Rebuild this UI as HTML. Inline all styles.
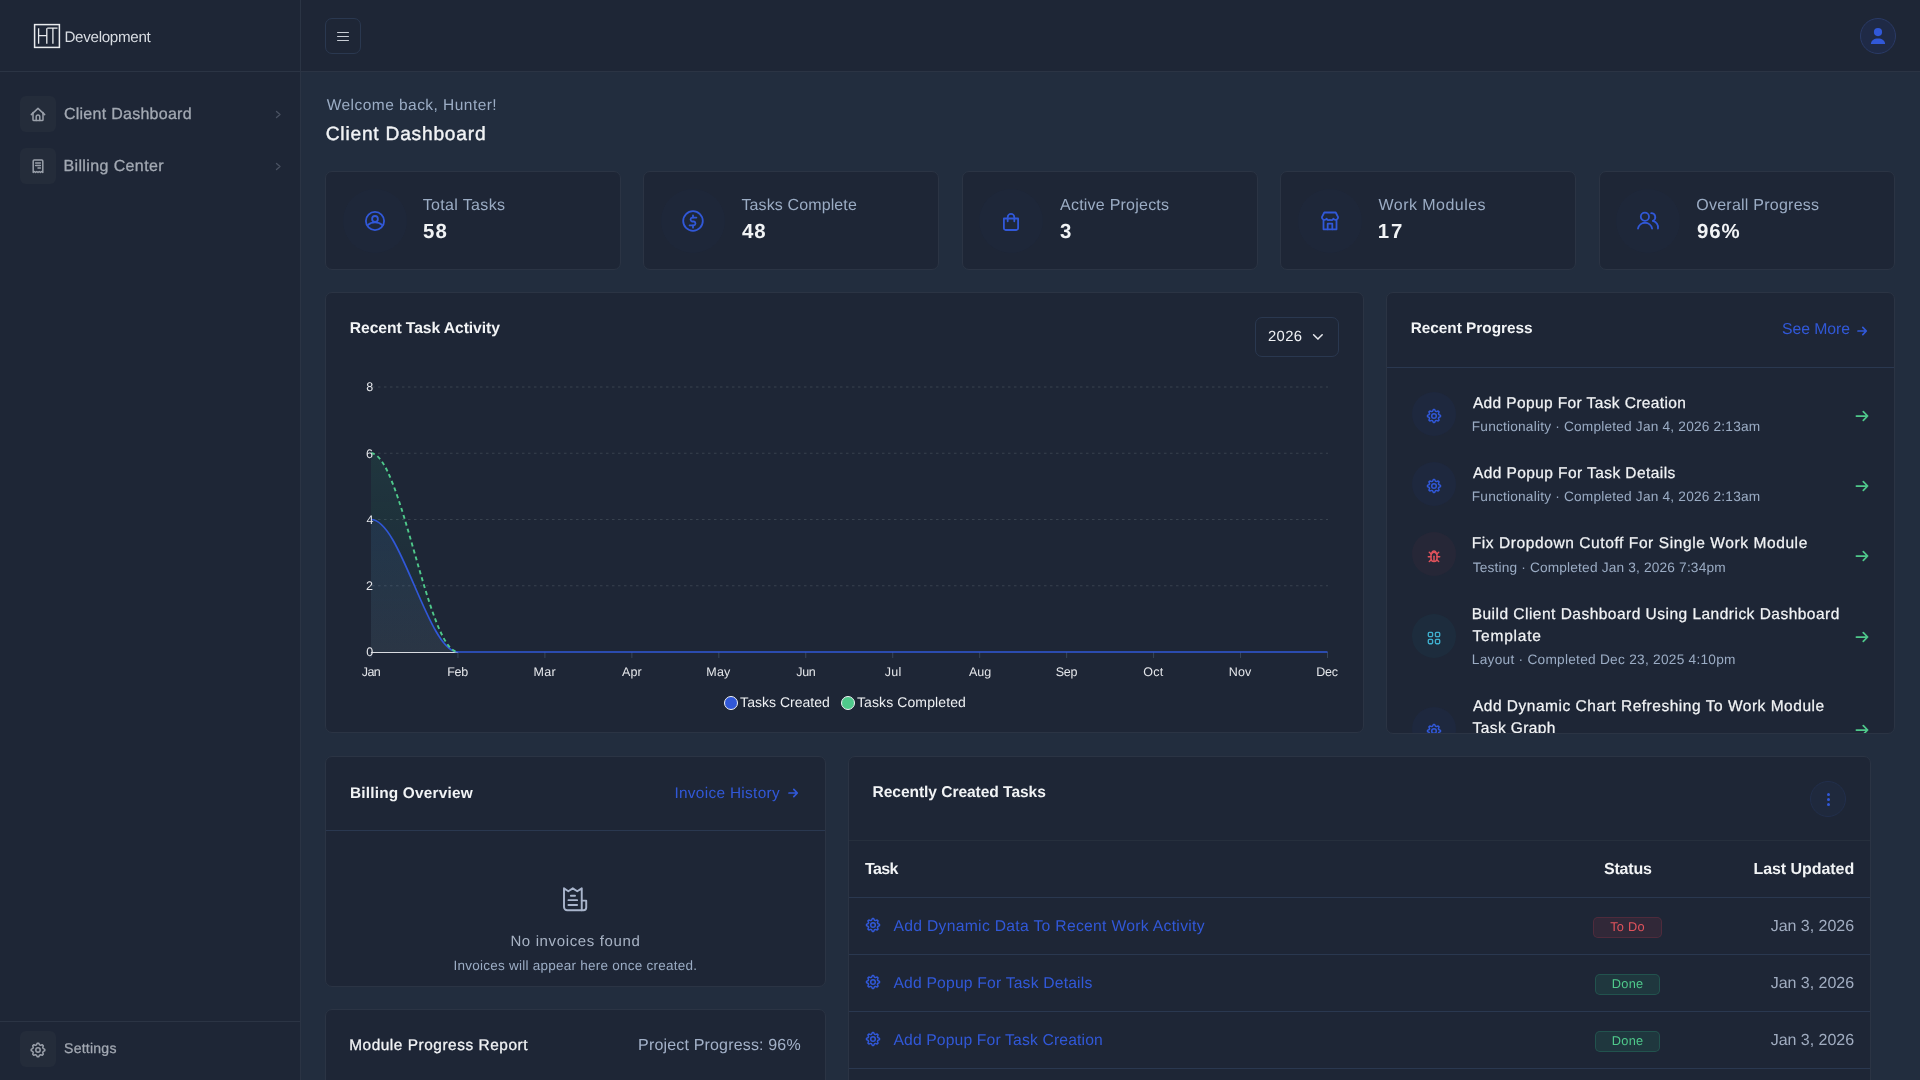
<!DOCTYPE html>
<html lang="en"><head><meta charset="utf-8"><title>Client Dashboard</title>
<style>
html,body{margin:0;padding:0}
body{width:1920px;height:1080px;overflow:hidden;position:relative;background:#222d3e;font-family:"Liberation Sans",sans-serif}
#root{position:absolute;left:0;top:0;width:1920px;height:1080px;overflow:hidden;will-change:transform;text-rendering:geometricPrecision}
.a{position:absolute}
.t{position:absolute;line-height:1;white-space:nowrap}
.card{background:#1e2636;border:1px solid #2b3444;border-radius:7px;box-sizing:border-box}
</style></head><body><div id="root">
<div class="a" style="left:0px;top:0px;width:300px;height:1080px;background:#1e2636;border-right:1px solid #2b3444"></div>
<div class="a" style="left:0px;top:71px;width:300px;height:1px;background:#2b3444"></div>
<svg class="a" style="left:33px;top:23px;" width="28" height="26" viewBox="0 0 28 26" fill="none"><rect x="1.6" y="1.6" width="24.8" height="22.8" stroke="#e9ebee" stroke-width="1.5"/><path d="M5.6 5.2v15.6M13.8 5.2v15.6M5.6 12.6h8.2M14.3 5.2h10.2M19.9 5.2v15.6" stroke="#e9ebee" stroke-width="1.3"/></svg>
<div class="t" style="left:64.48px;top:30px;font-size:15.2px;letter-spacing:-0.321px;color:#d8dce2;font-weight:400;">Development</div>
<div class="a" style="left:20px;top:96px;width:36px;height:36px;background:#242c3a;border-radius:6px"></div>
<svg class="a" style="left:26.00px;top:102.00px" width="24.00" height="24.00" viewBox="0 0 24 24" fill="none" stroke="#9aa0aa" stroke-width="1.5" stroke-linecap="round" stroke-linejoin="round"><path d="M5.3 12.6 12 6.4l6.7 6.2"/><path d="M7 10.6v7.1a.9.9 0 0 0 .9.9h8.2a.9.9 0 0 0 .9-.9v-7.1"/><path d="M10.2 18.5v-3.6a1.8 1.8 0 0 1 3.6 0v3.6"/></svg>
<div class="t" style="left:63.90px;top:107px;font-size:16px;letter-spacing:0.271px;color:#a3a9b3;font-weight:400;-webkit-text-stroke:0.3px #a3a9b3">Client Dashboard</div>
<svg class="a" style="left:274px;top:110px;" width="8" height="9" viewBox="0 0 8 9" fill="none"><path d="M2.5 1.5 6 4.5 2.5 7.5" stroke="#4a5262" stroke-width="1.3" stroke-linecap="round" stroke-linejoin="round"/></svg>
<div class="a" style="left:20px;top:148px;width:36px;height:36px;background:#242c3a;border-radius:6px"></div>
<svg class="a" style="left:26.00px;top:154.00px" width="24.00" height="24.00" viewBox="0 0 24 24" fill="none" stroke="#9aa0aa" stroke-width="1.5" stroke-linecap="round" stroke-linejoin="round"><path d="M7.2 18.4V6.9a1 1 0 0 1 1-1h7.6a1 1 0 0 1 1 1v11.5l-1.2-.9-1.2.9-1.2-.9-1.2.9-1.2-.9-1.2.9-1.2-.9z"/><path d="M9.6 9.1h4.8M9.6 11.4h4.8M12 13.9h2.4"/></svg>
<div class="t" style="left:63.42px;top:159px;font-size:16px;letter-spacing:0.386px;color:#a3a9b3;font-weight:400;-webkit-text-stroke:0.3px #a3a9b3">Billing Center</div>
<svg class="a" style="left:274px;top:162px;" width="8" height="9" viewBox="0 0 8 9" fill="none"><path d="M2.5 1.5 6 4.5 2.5 7.5" stroke="#4a5262" stroke-width="1.3" stroke-linecap="round" stroke-linejoin="round"/></svg>
<div class="a" style="left:0px;top:1021px;width:300px;height:1px;background:#2b3444"></div>
<div class="a" style="left:20px;top:1031px;width:36px;height:36px;background:#242c3a;border-radius:6px"></div>
<svg class="a" style="left:26.00px;top:1037.60px" width="24.00" height="24.00" viewBox="0 0 24 24" fill="none" stroke="#9aa0aa" stroke-width="1.5" stroke-linecap="round" stroke-linejoin="round"><path d="M11.33 5.23 L12.67 5.23 L13.57 6.83 L14.55 7.24 L16.31 6.74 L17.26 7.69 L16.76 9.45 L17.17 10.43 L18.77 11.33 L18.77 12.67 L17.17 13.57 L16.76 14.55 L17.26 16.31 L16.31 17.26 L14.55 16.76 L13.57 17.17 L12.67 18.77 L11.33 18.77 L10.43 17.17 L9.45 16.76 L7.69 17.26 L6.74 16.31 L7.24 14.55 L6.83 13.57 L5.23 12.67 L5.23 11.33 L6.83 10.43 L7.24 9.45 L6.74 7.69 L7.69 6.74 L9.45 7.24 L10.43 6.83Z"/><circle cx="12" cy="12" r="2.2"/></svg>
<div class="t" style="left:64.07px;top:1041px;font-size:14.1px;letter-spacing:0.208px;color:#a3a9b3;font-weight:400;-webkit-text-stroke:0.25px #a3a9b3">Settings</div>
<div class="a" style="left:301px;top:0px;width:1619px;height:71px;background:#1e2636"></div>
<div class="a" style="left:301px;top:71px;width:1619px;height:1px;background:#2b3444"></div>
<div class="a" style="left:325px;top:18px;width:36px;height:36px;border:1px solid #2a3850;border-radius:7px;box-sizing:border-box"></div>
<div class="a" style="left:337px;top:31.85px;width:12px;height:1.3px;background:#c9ced6;border-radius:1px"></div>
<div class="a" style="left:337px;top:35.85px;width:12px;height:1.3px;background:#c9ced6;border-radius:1px"></div>
<div class="a" style="left:337px;top:39.85px;width:12px;height:1.3px;background:#c9ced6;border-radius:1px"></div>
<div class="a" style="left:1860px;top:18px;width:36px;height:36px;background:#1f2a46;border:1px solid #2a3a66;border-radius:50%;box-sizing:border-box"></div>
<svg class="a" style="left:1868px;top:26px;" width="20" height="20" viewBox="0 0 20 20" fill="none"><circle cx="10" cy="6.1" r="4.1" fill="#3158d8"/><path d="M2.9 18c0-3.6 3.2-5.6 7.1-5.6s7.1 2 7.1 5.6z" fill="#3158d8"/></svg>
<div class="t" style="left:326.70px;top:98px;font-size:15.5px;letter-spacing:0.459px;color:#9bacc4;font-weight:400;">Welcome back, Hunter!</div>
<div class="t" style="left:325.74px;top:125px;font-size:19.2px;letter-spacing:0.773px;color:#f1f3f5;font-weight:400;-webkit-text-stroke:0.4px #f1f3f5">Client Dashboard</div>
<div class="a card" style="left:325px;top:171px;width:296px;height:99px"></div>
<div class="a" style="left:342.6px;top:188.5px;width:64px;height:64px;border-radius:50%;background:rgba(47,85,212,0.022)"></div>
<svg class="a" style="left:362.60px;top:208.80px" width="24.00" height="24.00" viewBox="0 0 24 24" fill="none" stroke="#3158d8" stroke-width="1.8" stroke-linecap="round" stroke-linejoin="round"><circle cx="12" cy="12" r="9.1"/><circle cx="12" cy="9.9" r="2.9"/><path d="M5.1 15.9C6.6 14.3 9.1 13.3 12 13.3s5.4 1 6.9 2.6"/></svg>
<div class="t" style="left:422.68px;top:198px;font-size:16px;letter-spacing:0.350px;color:#9bacc4;font-weight:400;">Total Tasks</div>
<div class="t" style="left:422.89px;top:222px;font-size:20.4px;letter-spacing:1.278px;color:#f1f3f5;font-weight:700;">58</div>
<div class="a card" style="left:643px;top:171px;width:296px;height:99px"></div>
<div class="a" style="left:661.0px;top:188.5px;width:64px;height:64px;border-radius:50%;background:rgba(47,85,212,0.022)"></div>
<svg class="a" style="left:681.00px;top:208.80px" width="24.00" height="24.00" viewBox="0 0 24 24" fill="none" stroke="#3158d8" stroke-width="1.8" stroke-linecap="round" stroke-linejoin="round"><circle cx="12" cy="12" r="9.8"/><path d="M15.4 8.6h-4.3a2 2 0 0 0 0 3.9h1.8a2 2 0 0 1 0 3.9H8.6"/><path d="M12 6.3v2.3M12 16.4v2.3"/></svg>
<div class="t" style="left:741.38px;top:198px;font-size:16px;letter-spacing:0.125px;color:#9bacc4;font-weight:400;">Tasks Complete</div>
<div class="t" style="left:741.89px;top:222px;font-size:20.4px;letter-spacing:1.072px;color:#f1f3f5;font-weight:700;">48</div>
<div class="a card" style="left:962px;top:171px;width:296px;height:99px"></div>
<div class="a" style="left:979.2px;top:188.5px;width:64px;height:64px;border-radius:50%;background:rgba(47,85,212,0.022)"></div>
<svg class="a" style="left:999.20px;top:208.80px" width="24.00" height="24.00" viewBox="0 0 24 24" fill="none" stroke="#3158d8" stroke-width="1.8" stroke-linecap="round" stroke-linejoin="round"><path d="M4.9 9.5h14.2v9.7a1.8 1.8 0 0 1-1.8 1.8H6.7a1.8 1.8 0 0 1-1.8-1.8z"/><path d="M8.7 12.3V8.2a3.3 3.3 0 0 1 6.6 0v4.1"/></svg>
<div class="t" style="left:1060.00px;top:198px;font-size:16px;letter-spacing:0.230px;color:#9bacc4;font-weight:400;">Active Projects</div>
<div class="t" style="left:1060.09px;top:222px;font-size:20.4px;letter-spacing:0.300px;color:#f1f3f5;font-weight:700;">3</div>
<div class="a card" style="left:1280px;top:171px;width:296px;height:99px"></div>
<div class="a" style="left:1297.9px;top:188.5px;width:64px;height:64px;border-radius:50%;background:rgba(47,85,212,0.022)"></div>
<svg class="a" style="left:1317.90px;top:208.80px" width="24.00" height="24.00" viewBox="0 0 24 24" fill="none" stroke="#3158d8" stroke-width="1.8" stroke-linecap="round" stroke-linejoin="round"><path d="M6.3 3.5h11.4l2.4 4.7a2.6 2.6 0 0 1-4.7 1.6 2.6 2.6 0 0 1-3.4 1 2.6 2.6 0 0 1-3.4-1A2.6 2.6 0 0 1 3.9 8.2z"/><path d="M5.5 10.9v9.4h13v-9.4"/><path d="M9.7 20.3v-5.6h4.6v5.6"/></svg>
<div class="t" style="left:1378.50px;top:198px;font-size:16px;letter-spacing:0.460px;color:#9bacc4;font-weight:400;">Work Modules</div>
<div class="t" style="left:1377.78px;top:222px;font-size:20.4px;letter-spacing:1.896px;color:#f1f3f5;font-weight:700;">17</div>
<div class="a card" style="left:1599px;top:171px;width:296px;height:99px"></div>
<div class="a" style="left:1616.0px;top:188.5px;width:64px;height:64px;border-radius:50%;background:rgba(47,85,212,0.022)"></div>
<svg class="a" style="left:1636.00px;top:208.80px" width="24.00" height="24.00" viewBox="0 0 24 24" fill="none" stroke="#3158d8" stroke-width="1.8" stroke-linecap="round" stroke-linejoin="round"><circle cx="8.9" cy="7.8" r="4.1"/><path d="M2 19.5A7.2 7.2 0 0 1 16.1 19.5"/><path d="M15.2 4.2A4 4 0 0 1 17 11.8"/><path d="M17 11.9A7.4 7.4 0 0 1 22 19.5"/></svg>
<div class="t" style="left:1696.28px;top:198px;font-size:16px;letter-spacing:0.244px;color:#9bacc4;font-weight:400;">Overall Progress</div>
<div class="t" style="left:1696.89px;top:222px;font-size:20.4px;letter-spacing:0.911px;color:#f1f3f5;font-weight:700;">96%</div>
<div class="a card" style="left:325px;top:292px;width:1039px;height:441px"></div>
<div class="t" style="left:349.78px;top:321px;font-size:15.7px;letter-spacing:-0.084px;color:#f1f3f5;font-weight:700;">Recent Task Activity</div>
<div class="a" style="left:1255px;top:317px;width:84px;height:40px;border:1px solid #2a3850;border-radius:7px;box-sizing:border-box"></div>
<div class="t" style="left:1268.06px;top:330px;font-size:14.8px;letter-spacing:0.334px;color:#eef0f3;font-weight:400;">2026</div>
<svg class="a" style="left:1311px;top:331px;" width="14" height="10" viewBox="0 0 14 10" fill="none"><path d="M2.6 3.7 6.9 8.1 11.2 3.7" stroke="#e6e8ec" stroke-width="1.5" stroke-linecap="round" stroke-linejoin="round"/></svg>
<svg class="a" style="left:0;top:0" width="1920" height="1080" viewBox="0 0 1920 1080"><line x1="372" y1="387" x2="1328" y2="387" stroke="#38424f" stroke-width="1" stroke-dasharray="2.5 3.5"/><line x1="372" y1="453.25" x2="1328" y2="453.25" stroke="#38424f" stroke-width="1" stroke-dasharray="2.5 3.5"/><line x1="372" y1="519.5" x2="1328" y2="519.5" stroke="#38424f" stroke-width="1" stroke-dasharray="2.5 3.5"/><line x1="372" y1="585.75" x2="1328" y2="585.75" stroke="#38424f" stroke-width="1" stroke-dasharray="2.5 3.5"/><defs><linearGradient id="gg" x1="0" y1="0" x2="0" y2="1"><stop offset="0" stop-color="#2eca8b" stop-opacity="0.10"/><stop offset="1" stop-color="#2eca8b" stop-opacity="0.02"/></linearGradient><linearGradient id="gb" x1="0" y1="0" x2="0" y2="1"><stop offset="0" stop-color="#3a5fd0" stop-opacity="0.10"/><stop offset="1" stop-color="#8a96aa" stop-opacity="0.12"/></linearGradient></defs><path d="M371.0 453.25 C401.0 453.25 427.95454545454544 652 457.95454545454544 652 L371.0 652Z" fill="url(#gg)"/><path d="M371.0 519.5 C401.0 519.5 427.95454545454544 652 457.95454545454544 652 L371.0 652Z" fill="url(#gb)"/><line x1="371.00" y1="652" x2="371.00" y2="658" stroke="#38465a" stroke-width="1"/><line x1="457.95" y1="652" x2="457.95" y2="658" stroke="#38465a" stroke-width="1"/><line x1="544.91" y1="652" x2="544.91" y2="658" stroke="#38465a" stroke-width="1"/><line x1="631.86" y1="652" x2="631.86" y2="658" stroke="#38465a" stroke-width="1"/><line x1="718.82" y1="652" x2="718.82" y2="658" stroke="#38465a" stroke-width="1"/><line x1="805.77" y1="652" x2="805.77" y2="658" stroke="#38465a" stroke-width="1"/><line x1="892.73" y1="652" x2="892.73" y2="658" stroke="#38465a" stroke-width="1"/><line x1="979.68" y1="652" x2="979.68" y2="658" stroke="#38465a" stroke-width="1"/><line x1="1066.64" y1="652" x2="1066.64" y2="658" stroke="#38465a" stroke-width="1"/><line x1="1153.59" y1="652" x2="1153.59" y2="658" stroke="#38465a" stroke-width="1"/><line x1="1240.55" y1="652" x2="1240.55" y2="658" stroke="#38465a" stroke-width="1"/><line x1="1327.50" y1="652" x2="1327.50" y2="658" stroke="#38465a" stroke-width="1"/><line x1="371.0" y1="652.5" x2="457.95454545454544" y2="652.5" stroke="#d9dce1" stroke-width="1.2"/><path d="M371.0 519.5 C401.0 519.5 427.95454545454544 652 457.95454545454544 652 L1327.5 652" stroke="#3158d8" stroke-width="1.7" fill="none"/><path d="M371.0 453.25 C401.0 453.25 427.95454545454544 652 457.95454545454544 652" stroke="#4fc98b" stroke-width="1.9" fill="none" stroke-dasharray="4 3.2"/></svg>
<div class="t" style="left:366.20px;top:381px;font-size:12.5px;letter-spacing:0.262px;color:#e4e6ea;font-weight:400;">8</div>
<div class="t" style="left:366.07px;top:448px;font-size:12.5px;letter-spacing:0.387px;color:#e4e6ea;font-weight:400;">6</div>
<div class="t" style="left:366.45px;top:514px;font-size:12.5px;letter-spacing:-0.175px;color:#e4e6ea;font-weight:400;">4</div>
<div class="t" style="left:366.07px;top:580px;font-size:12.5px;letter-spacing:0.450px;color:#e4e6ea;font-weight:400;">2</div>
<div class="t" style="left:366.26px;top:646px;font-size:12.5px;letter-spacing:0.137px;color:#e4e6ea;font-weight:400;">0</div>
<div class="t" style="left:361.81px;top:666px;font-size:12.5px;letter-spacing:-0.594px;color:#e4e6ea;font-weight:400;">Jan</div>
<div class="t" style="left:447.20px;top:666px;font-size:12.5px;letter-spacing:-0.250px;color:#e4e6ea;font-weight:400;">Feb</div>
<div class="t" style="left:533.41px;top:666px;font-size:12.5px;letter-spacing:0.312px;color:#e4e6ea;font-weight:400;">Mar</div>
<div class="t" style="left:622.11px;top:666px;font-size:12.5px;letter-spacing:0.094px;color:#e4e6ea;font-weight:400;">Apr</div>
<div class="t" style="left:706.32px;top:666px;font-size:12.5px;letter-spacing:0.188px;color:#e4e6ea;font-weight:400;">May</div>
<div class="t" style="left:796.34px;top:666px;font-size:12.5px;letter-spacing:-0.344px;color:#e4e6ea;font-weight:400;">Jun</div>
<div class="t" style="left:884.79px;top:666px;font-size:12.5px;letter-spacing:0.250px;color:#e4e6ea;font-weight:400;">Jul</div>
<div class="t" style="left:968.93px;top:666px;font-size:12.5px;letter-spacing:0.000px;color:#e4e6ea;font-weight:400;">Aug</div>
<div class="t" style="left:1055.82px;top:666px;font-size:12.5px;letter-spacing:-0.344px;color:#e4e6ea;font-weight:400;">Sep</div>
<div class="t" style="left:1143.28px;top:666px;font-size:12.5px;letter-spacing:0.312px;color:#e4e6ea;font-weight:400;">Oct</div>
<div class="t" style="left:1228.85px;top:666px;font-size:12.5px;letter-spacing:0.075px;color:#e4e6ea;font-weight:400;">Nov</div>
<div class="t" style="left:1316.25px;top:666px;font-size:12.5px;letter-spacing:-0.219px;color:#e4e6ea;font-weight:400;">Dec</div>
<div class="a" style="left:723.5px;top:695.5px;width:14px;height:14px;background:#3158d8;border:1.2px solid #f1f3f5;border-radius:50%;box-sizing:border-box"></div>
<div class="t" style="left:740.12px;top:695px;font-size:14px;letter-spacing:0.022px;color:#eef0f3;font-weight:400;">Tasks Created</div>
<div class="a" style="left:840.5px;top:695.5px;width:14px;height:14px;background:#4fc98b;border:1.2px solid #f1f3f5;border-radius:50%;box-sizing:border-box"></div>
<div class="t" style="left:856.92px;top:695px;font-size:14px;letter-spacing:0.110px;color:#eef0f3;font-weight:400;">Tasks Completed</div>
<div class="a card" style="left:1386px;top:292px;width:509px;height:442px"></div>
<div class="a" style="left:0;top:0;width:1920px;height:733px;overflow:hidden"><div class="t" style="left:1410.70px;top:321px;font-size:15.4px;letter-spacing:-0.030px;color:#f1f3f5;font-weight:700;">Recent Progress</div><div class="t" style="left:1781.99px;top:322px;font-size:15.8px;letter-spacing:-0.064px;color:#3158d8;font-weight:400;">See More</div><svg class="a" style="left:1850.00px;top:318.50px" width="24.00" height="24.00" viewBox="0 0 24 24" fill="none" stroke="#3158d8" stroke-width="1.7" stroke-linecap="round" stroke-linejoin="round"><path d="M8 12h8M12.8 8.4 16.3 12l-3.5 3.6"/></svg><div class="a" style="left:1387px;top:367px;width:507px;height:1px;background:#2a3850"></div><div class="a" style="left:1412px;top:391.90px;width:44px;height:44px;border-radius:50%;background:rgba(47,85,212,0.05)"></div><svg class="a" style="left:1422.00px;top:403.60px" width="24.00" height="24.00" viewBox="0 0 24 24" fill="none" stroke="#3158d8" stroke-width="1.5" stroke-linecap="round" stroke-linejoin="round"><path d="M11.36 5.53 L12.64 5.53 L13.45 7.22 L14.36 7.59 L16.12 6.98 L17.02 7.88 L16.41 9.64 L16.78 10.55 L18.47 11.36 L18.47 12.64 L16.78 13.45 L16.41 14.36 L17.02 16.12 L16.12 17.02 L14.36 16.41 L13.45 16.78 L12.64 18.47 L11.36 18.47 L10.55 16.78 L9.64 16.41 L7.88 17.02 L6.98 16.12 L7.59 14.36 L7.22 13.45 L5.53 12.64 L5.53 11.36 L7.22 10.55 L7.59 9.64 L6.98 7.88 L7.88 6.98 L9.64 7.59 L10.55 7.22Z"/><circle cx="12" cy="12" r="2.3"/></svg><div class="t" style="left:1472.90px;top:396px;font-size:15.5px;letter-spacing:0.384px;color:#f1f3f5;font-weight:400;-webkit-text-stroke:0.25px #f1f3f5">Add Popup For Task Creation</div><div class="t" style="left:1471.80px;top:420px;font-size:13.7px;letter-spacing:0.195px;color:#9bacc4;font-weight:400;">Functionality · Completed Jan 4, 2026 2:13am</div><svg class="a" style="left:1849.80px;top:403.50px" width="24.00" height="24.00" viewBox="0 0 24 24" fill="none" stroke="#4fc98b" stroke-width="1.75" stroke-linecap="round" stroke-linejoin="round"><path d="M6.4 12h11M13.3 7.7 17.6 12l-4.3 4.3"/></svg><div class="a" style="left:1412px;top:461.90px;width:44px;height:44px;border-radius:50%;background:rgba(47,85,212,0.05)"></div><svg class="a" style="left:1422.00px;top:473.60px" width="24.00" height="24.00" viewBox="0 0 24 24" fill="none" stroke="#3158d8" stroke-width="1.5" stroke-linecap="round" stroke-linejoin="round"><path d="M11.36 5.53 L12.64 5.53 L13.45 7.22 L14.36 7.59 L16.12 6.98 L17.02 7.88 L16.41 9.64 L16.78 10.55 L18.47 11.36 L18.47 12.64 L16.78 13.45 L16.41 14.36 L17.02 16.12 L16.12 17.02 L14.36 16.41 L13.45 16.78 L12.64 18.47 L11.36 18.47 L10.55 16.78 L9.64 16.41 L7.88 17.02 L6.98 16.12 L7.59 14.36 L7.22 13.45 L5.53 12.64 L5.53 11.36 L7.22 10.55 L7.59 9.64 L6.98 7.88 L7.88 6.98 L9.64 7.59 L10.55 7.22Z"/><circle cx="12" cy="12" r="2.3"/></svg><div class="t" style="left:1472.90px;top:466px;font-size:15.5px;letter-spacing:0.421px;color:#f1f3f5;font-weight:400;-webkit-text-stroke:0.25px #f1f3f5">Add Popup For Task Details</div><div class="t" style="left:1471.80px;top:490px;font-size:13.7px;letter-spacing:0.195px;color:#9bacc4;font-weight:400;">Functionality · Completed Jan 4, 2026 2:13am</div><svg class="a" style="left:1849.80px;top:473.50px" width="24.00" height="24.00" viewBox="0 0 24 24" fill="none" stroke="#4fc98b" stroke-width="1.75" stroke-linecap="round" stroke-linejoin="round"><path d="M6.4 12h11M13.3 7.7 17.6 12l-4.3 4.3"/></svg><div class="a" style="left:1412px;top:532.00px;width:44px;height:44px;border-radius:50%;background:rgba(228,63,82,0.045)"></div><svg class="a" style="left:1422.00px;top:543.70px" width="24.00" height="24.00" viewBox="0 0 24 24" fill="none" stroke="#e0535c" stroke-width="1.5" stroke-linecap="round" stroke-linejoin="round"><path d="M9 11.3a3 3 0 0 1 6 0v3.2a3 3 0 0 1-6 0z"/><path d="M10.2 8.9a1.8 1.8 0 0 1 3.6 0"/><path d="M12 12.2v4.2"/><path d="M9 12.8H6.3M15 12.8h2.7M9.4 10.2 7.3 8.3M14.6 10.2l2.1-1.9M9.3 15.7l-2 1.8M14.7 15.7l2 1.8"/></svg><div class="t" style="left:1471.66px;top:536px;font-size:15.5px;letter-spacing:0.593px;color:#f1f3f5;font-weight:400;-webkit-text-stroke:0.25px #f1f3f5">Fix Dropdown Cutoff For Single Work Module</div><div class="t" style="left:1472.63px;top:561px;font-size:13.7px;letter-spacing:0.175px;color:#9bacc4;font-weight:400;">Testing · Completed Jan 3, 2026 7:34pm</div><svg class="a" style="left:1849.80px;top:543.60px" width="24.00" height="24.00" viewBox="0 0 24 24" fill="none" stroke="#4fc98b" stroke-width="1.75" stroke-linecap="round" stroke-linejoin="round"><path d="M6.4 12h11M13.3 7.7 17.6 12l-4.3 4.3"/></svg><div class="a" style="left:1412px;top:613.80px;width:44px;height:44px;border-radius:50%;background:rgba(23,162,184,0.055)"></div><svg class="a" style="left:1422.00px;top:625.50px" width="24.00" height="24.00" viewBox="0 0 24 24" fill="none" stroke="#3fb0cf" stroke-width="1.35" stroke-linecap="round" stroke-linejoin="round"><rect x="6.3" y="6.3" width="4.3" height="4.3" rx="1.1"/><rect x="13.4" y="6.3" width="4.3" height="4.3" rx="1.1"/><rect x="6.3" y="13.4" width="4.3" height="4.3" rx="1.1"/><rect x="13.4" y="13.4" width="4.3" height="4.3" rx="1.1"/></svg><div class="t" style="left:1471.66px;top:607px;font-size:15.5px;letter-spacing:0.482px;color:#f1f3f5;font-weight:400;-webkit-text-stroke:0.25px #f1f3f5">Build Client Dashboard Using Landrick Dashboard</div><div class="t" style="left:1472.59px;top:629px;font-size:15.5px;letter-spacing:0.782px;color:#f1f3f5;font-weight:400;-webkit-text-stroke:0.25px #f1f3f5">Template</div><div class="t" style="left:1471.80px;top:653px;font-size:13.7px;letter-spacing:0.259px;color:#9bacc4;font-weight:400;">Layout · Completed Dec 23, 2025 4:10pm</div><svg class="a" style="left:1849.80px;top:625.40px" width="24.00" height="24.00" viewBox="0 0 24 24" fill="none" stroke="#4fc98b" stroke-width="1.75" stroke-linecap="round" stroke-linejoin="round"><path d="M6.4 12h11M13.3 7.7 17.6 12l-4.3 4.3"/></svg><div class="a" style="left:1412px;top:706.80px;width:44px;height:44px;border-radius:50%;background:rgba(47,85,212,0.05)"></div><svg class="a" style="left:1422.00px;top:718.50px" width="24.00" height="24.00" viewBox="0 0 24 24" fill="none" stroke="#3158d8" stroke-width="1.5" stroke-linecap="round" stroke-linejoin="round"><path d="M11.36 5.53 L12.64 5.53 L13.45 7.22 L14.36 7.59 L16.12 6.98 L17.02 7.88 L16.41 9.64 L16.78 10.55 L18.47 11.36 L18.47 12.64 L16.78 13.45 L16.41 14.36 L17.02 16.12 L16.12 17.02 L14.36 16.41 L13.45 16.78 L12.64 18.47 L11.36 18.47 L10.55 16.78 L9.64 16.41 L7.88 17.02 L6.98 16.12 L7.59 14.36 L7.22 13.45 L5.53 12.64 L5.53 11.36 L7.22 10.55 L7.59 9.64 L6.98 7.88 L7.88 6.98 L9.64 7.59 L10.55 7.22Z"/><circle cx="12" cy="12" r="2.3"/></svg><div class="t" style="left:1472.90px;top:699px;font-size:15.5px;letter-spacing:0.520px;color:#f1f3f5;font-weight:400;-webkit-text-stroke:0.25px #f1f3f5">Add Dynamic Chart Refreshing To Work Module</div><div class="t" style="left:1472.59px;top:721px;font-size:15.5px;letter-spacing:0.393px;color:#f1f3f5;font-weight:400;-webkit-text-stroke:0.25px #f1f3f5">Task Graph</div><div class="t" style="left:1471.80px;top:745px;font-size:13.7px;letter-spacing:0.195px;color:#9bacc4;font-weight:400;">Functionality · Completed Jan 2, 2026 1:05pm</div><svg class="a" style="left:1849.80px;top:718.40px" width="24.00" height="24.00" viewBox="0 0 24 24" fill="none" stroke="#4fc98b" stroke-width="1.75" stroke-linecap="round" stroke-linejoin="round"><path d="M6.4 12h11M13.3 7.7 17.6 12l-4.3 4.3"/></svg></div>
<div class="a card" style="left:325px;top:756px;width:501px;height:231px"></div>
<div class="t" style="left:349.90px;top:786px;font-size:15.4px;letter-spacing:0.206px;color:#f1f3f5;font-weight:700;">Billing Overview</div>
<div class="t" style="left:674.41px;top:786px;font-size:15.4px;letter-spacing:0.312px;color:#3158d8;font-weight:400;">Invoice History</div>
<svg class="a" style="left:780.80px;top:781.40px" width="24.00" height="24.00" viewBox="0 0 24 24" fill="none" stroke="#3158d8" stroke-width="1.7" stroke-linecap="round" stroke-linejoin="round"><path d="M8 12h8M12.8 8.4 16.3 12l-3.5 3.6"/></svg>
<div class="a" style="left:326px;top:830px;width:499px;height:1px;background:#2a3850"></div>
<svg class="a" style="left:555.80px;top:879.80px" width="38.40" height="38.40" viewBox="0 0 24 24" fill="none" stroke="#a9b5cc" stroke-width="1.2" stroke-linecap="round" stroke-linejoin="round"><path d="M5 5.2 7.7 7l2.8-1.8L13.3 7l2.8-1.8v13.7H7a2 2 0 0 1-2-2z"/><path d="M16.1 12.9h2.8v4.3a1.7 1.7 0 0 1-1.7 1.7H16.1"/><path d="M9.3 9.8h2.6M7.8 12.6h5.4M7.8 15.6h5.4"/></svg>
<div class="t" style="left:510.40px;top:934px;font-size:15px;letter-spacing:0.634px;color:#a8b3c4;font-weight:400;">No invoices found</div>
<div class="t" style="left:453.49px;top:959px;font-size:13.5px;letter-spacing:0.247px;color:#9bacc4;font-weight:400;">Invoices will appear here once created.</div>
<div class="a card" style="left:325px;top:1009px;width:501px;height:120px"></div>
<div class="t" style="left:349.17px;top:1038px;font-size:15.4px;letter-spacing:0.546px;color:#f1f3f5;font-weight:400;-webkit-text-stroke:0.3px #f1f3f5">Module Progress Report</div>
<div class="t" style="left:638.12px;top:1038px;font-size:16px;letter-spacing:0.167px;color:#a3b1c8;font-weight:400;">Project Progress: 96%</div>
<div class="a card" style="left:848px;top:756px;width:1023px;height:400px"></div>
<div class="t" style="left:872.49px;top:785px;font-size:15.6px;letter-spacing:-0.067px;color:#f1f3f5;font-weight:700;">Recently Created Tasks</div>
<div class="a" style="left:1810px;top:781px;width:36px;height:36px;background:#1f293d;border:1.2px solid #222f4c;border-radius:50%;box-sizing:border-box"></div>
<div class="a" style="left:1826.5px;top:793.4px;width:3px;height:3px;border-radius:50%;background:#3158d8"></div>
<div class="a" style="left:1826.5px;top:798.1px;width:3px;height:3px;border-radius:50%;background:#3158d8"></div>
<div class="a" style="left:1826.5px;top:802.9px;width:3px;height:3px;border-radius:50%;background:#3158d8"></div>
<div class="a" style="left:849px;top:840px;width:1021px;height:1px;background:#262f3d"></div>
<div class="a" style="left:849px;top:897px;width:1021px;height:1px;background:#2a3850"></div>
<div class="t" style="left:865.04px;top:862px;font-size:16px;letter-spacing:-0.633px;color:#f1f3f5;font-weight:700;">Task</div>
<div class="t" style="left:1603.90px;top:862px;font-size:16px;letter-spacing:-0.184px;color:#f1f3f5;font-weight:700;">Status</div>
<div class="t" style="left:1753.46px;top:862px;font-size:16px;letter-spacing:-0.053px;color:#f1f3f5;font-weight:700;">Last Updated</div>
<div class="a" style="left:849px;top:954px;width:1021px;height:1px;background:#2a3850"></div>
<svg class="a" style="left:861.00px;top:912.70px" width="24.00" height="24.00" viewBox="0 0 24 24" fill="none" stroke="#3158d8" stroke-width="1.5" stroke-linecap="round" stroke-linejoin="round"><path d="M11.36 5.53 L12.64 5.53 L13.45 7.22 L14.36 7.59 L16.12 6.98 L17.02 7.88 L16.41 9.64 L16.78 10.55 L18.47 11.36 L18.47 12.64 L16.78 13.45 L16.41 14.36 L17.02 16.12 L16.12 17.02 L14.36 16.41 L13.45 16.78 L12.64 18.47 L11.36 18.47 L10.55 16.78 L9.64 16.41 L7.88 17.02 L6.98 16.12 L7.59 14.36 L7.22 13.45 L5.53 12.64 L5.53 11.36 L7.22 10.55 L7.59 9.64 L6.98 7.88 L7.88 6.98 L9.64 7.59 L10.55 7.22Z"/><circle cx="12" cy="12" r="2.3"/></svg>
<div class="t" style="left:893.40px;top:919px;font-size:15.7px;letter-spacing:0.304px;color:#3158d8;font-weight:400;">Add Dynamic Data To Recent Work Activity</div>
<div class="a" style="left:1593px;top:917.0999999999999px;width:69px;height:21px;background:rgba(228,63,82,0.10);border:1px solid rgba(228,63,82,0.17);border-radius:5px;box-sizing:border-box"></div>
<div class="t" style="left:1610.14px;top:921px;font-size:12.8px;letter-spacing:0.290px;color:#e0535c;font-weight:400;">To Do</div>
<div class="t" style="left:1770.66px;top:919px;font-size:16px;letter-spacing:-0.022px;color:#a0acc0;font-weight:400;">Jan 3, 2026</div>
<div class="a" style="left:849px;top:1011px;width:1021px;height:1px;background:#2a3850"></div>
<svg class="a" style="left:861.00px;top:969.70px" width="24.00" height="24.00" viewBox="0 0 24 24" fill="none" stroke="#3158d8" stroke-width="1.5" stroke-linecap="round" stroke-linejoin="round"><path d="M11.36 5.53 L12.64 5.53 L13.45 7.22 L14.36 7.59 L16.12 6.98 L17.02 7.88 L16.41 9.64 L16.78 10.55 L18.47 11.36 L18.47 12.64 L16.78 13.45 L16.41 14.36 L17.02 16.12 L16.12 17.02 L14.36 16.41 L13.45 16.78 L12.64 18.47 L11.36 18.47 L10.55 16.78 L9.64 16.41 L7.88 17.02 L6.98 16.12 L7.59 14.36 L7.22 13.45 L5.53 12.64 L5.53 11.36 L7.22 10.55 L7.59 9.64 L6.98 7.88 L7.88 6.98 L9.64 7.59 L10.55 7.22Z"/><circle cx="12" cy="12" r="2.3"/></svg>
<div class="t" style="left:893.40px;top:976px;font-size:15.7px;letter-spacing:0.190px;color:#3158d8;font-weight:400;">Add Popup For Task Details</div>
<div class="a" style="left:1595px;top:974.0999999999999px;width:65px;height:21px;background:rgba(46,202,139,0.10);border:1px solid rgba(46,202,139,0.2);border-radius:5px;box-sizing:border-box"></div>
<div class="t" style="left:1611.73px;top:978px;font-size:12.8px;letter-spacing:0.298px;color:#4fc98b;font-weight:400;">Done</div>
<div class="t" style="left:1770.66px;top:976px;font-size:16px;letter-spacing:-0.022px;color:#a0acc0;font-weight:400;">Jan 3, 2026</div>
<div class="a" style="left:849px;top:1068px;width:1021px;height:1px;background:#2a3850"></div>
<svg class="a" style="left:861.00px;top:1026.70px" width="24.00" height="24.00" viewBox="0 0 24 24" fill="none" stroke="#3158d8" stroke-width="1.5" stroke-linecap="round" stroke-linejoin="round"><path d="M11.36 5.53 L12.64 5.53 L13.45 7.22 L14.36 7.59 L16.12 6.98 L17.02 7.88 L16.41 9.64 L16.78 10.55 L18.47 11.36 L18.47 12.64 L16.78 13.45 L16.41 14.36 L17.02 16.12 L16.12 17.02 L14.36 16.41 L13.45 16.78 L12.64 18.47 L11.36 18.47 L10.55 16.78 L9.64 16.41 L7.88 17.02 L6.98 16.12 L7.59 14.36 L7.22 13.45 L5.53 12.64 L5.53 11.36 L7.22 10.55 L7.59 9.64 L6.98 7.88 L7.88 6.98 L9.64 7.59 L10.55 7.22Z"/><circle cx="12" cy="12" r="2.3"/></svg>
<div class="t" style="left:893.40px;top:1033px;font-size:15.7px;letter-spacing:0.149px;color:#3158d8;font-weight:400;">Add Popup For Task Creation</div>
<div class="a" style="left:1595px;top:1031.1px;width:65px;height:21px;background:rgba(46,202,139,0.10);border:1px solid rgba(46,202,139,0.2);border-radius:5px;box-sizing:border-box"></div>
<div class="t" style="left:1611.73px;top:1035px;font-size:12.8px;letter-spacing:0.298px;color:#4fc98b;font-weight:400;">Done</div>
<div class="t" style="left:1770.66px;top:1033px;font-size:16px;letter-spacing:-0.022px;color:#a0acc0;font-weight:400;">Jan 3, 2026</div>
</div></body></html>
